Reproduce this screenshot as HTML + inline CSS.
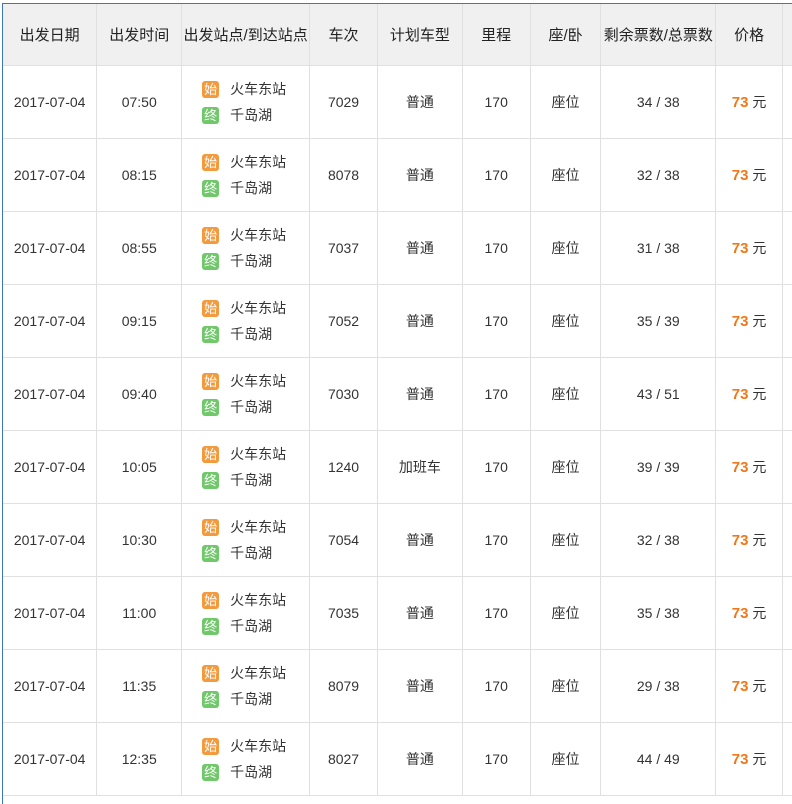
<!DOCTYPE html>
<html><head><meta charset="utf-8"><style>
html,body{margin:0;padding:0;background:#fff;width:792px;height:788px;overflow:hidden}
body{font-family:"Liberation Sans","Noto Sans CJK SC",sans-serif;color:#333}
.wrap{position:absolute;left:2px;top:3px;border-top:1px solid #3b78c0;border-left:1px solid #3b78c0;width:800px;height:800px}
table{border-collapse:collapse;table-layout:fixed;position:absolute;left:0;top:0}
td,th{border-right:1px solid #e0e0e0;border-bottom:1px solid #e0e0e0;text-align:center;padding:0;font-size:14px;font-weight:normal}
th{background:#f0f0f0;height:61px;font-size:15px;color:#222}
td{height:72px}
.st{text-align:left;padding-left:20px}
.st div{height:26px;line-height:26px;white-space:nowrap}
.b{display:inline-block;width:17px;height:17px;line-height:17px;border-radius:3px;color:#fff;font-size:13px;text-align:center;vertical-align:middle;margin-right:11px;position:relative;top:-1px}
.o{background:#f39a3c}.g{background:#70c86b}
.p{color:#f07818;font-weight:bold;font-size:15px}
</style></head><body>
<div class="wrap">
<table>
<colgroup><col style="width:94px"><col style="width:85px"><col style="width:128px"><col style="width:68px"><col style="width:85px"><col style="width:68px"><col style="width:71px"><col style="width:115px"><col style="width:67px"><col style="width:20px"></colgroup>
<tr><th>出发日期</th><th>出发时间</th><th>出发站点/到达站点</th><th>车次</th><th>计划车型</th><th>里程</th><th>座/卧</th><th>剩余票数/总票数</th><th>价格</th><th></th></tr>
<tr><td>2017-07-04</td><td>07:50</td><td class="st"><div><span class="b o">始</span>火车东站</div><div><span class="b g">终</span>千岛湖</div></td><td>7029</td><td>普通</td><td>170</td><td>座位</td><td>34 / 38</td><td><span class="p">73</span> 元</td><td></td></tr>
<tr><td>2017-07-04</td><td>08:15</td><td class="st"><div><span class="b o">始</span>火车东站</div><div><span class="b g">终</span>千岛湖</div></td><td>8078</td><td>普通</td><td>170</td><td>座位</td><td>32 / 38</td><td><span class="p">73</span> 元</td><td></td></tr>
<tr><td>2017-07-04</td><td>08:55</td><td class="st"><div><span class="b o">始</span>火车东站</div><div><span class="b g">终</span>千岛湖</div></td><td>7037</td><td>普通</td><td>170</td><td>座位</td><td>31 / 38</td><td><span class="p">73</span> 元</td><td></td></tr>
<tr><td>2017-07-04</td><td>09:15</td><td class="st"><div><span class="b o">始</span>火车东站</div><div><span class="b g">终</span>千岛湖</div></td><td>7052</td><td>普通</td><td>170</td><td>座位</td><td>35 / 39</td><td><span class="p">73</span> 元</td><td></td></tr>
<tr><td>2017-07-04</td><td>09:40</td><td class="st"><div><span class="b o">始</span>火车东站</div><div><span class="b g">终</span>千岛湖</div></td><td>7030</td><td>普通</td><td>170</td><td>座位</td><td>43 / 51</td><td><span class="p">73</span> 元</td><td></td></tr>
<tr><td>2017-07-04</td><td>10:05</td><td class="st"><div><span class="b o">始</span>火车东站</div><div><span class="b g">终</span>千岛湖</div></td><td>1240</td><td>加班车</td><td>170</td><td>座位</td><td>39 / 39</td><td><span class="p">73</span> 元</td><td></td></tr>
<tr><td>2017-07-04</td><td>10:30</td><td class="st"><div><span class="b o">始</span>火车东站</div><div><span class="b g">终</span>千岛湖</div></td><td>7054</td><td>普通</td><td>170</td><td>座位</td><td>32 / 38</td><td><span class="p">73</span> 元</td><td></td></tr>
<tr><td>2017-07-04</td><td>11:00</td><td class="st"><div><span class="b o">始</span>火车东站</div><div><span class="b g">终</span>千岛湖</div></td><td>7035</td><td>普通</td><td>170</td><td>座位</td><td>35 / 38</td><td><span class="p">73</span> 元</td><td></td></tr>
<tr><td>2017-07-04</td><td>11:35</td><td class="st"><div><span class="b o">始</span>火车东站</div><div><span class="b g">终</span>千岛湖</div></td><td>8079</td><td>普通</td><td>170</td><td>座位</td><td>29 / 38</td><td><span class="p">73</span> 元</td><td></td></tr>
<tr><td>2017-07-04</td><td>12:35</td><td class="st"><div><span class="b o">始</span>火车东站</div><div><span class="b g">终</span>千岛湖</div></td><td>8027</td><td>普通</td><td>170</td><td>座位</td><td>44 / 49</td><td><span class="p">73</span> 元</td><td></td></tr>
</table>
</div>
</body></html>
